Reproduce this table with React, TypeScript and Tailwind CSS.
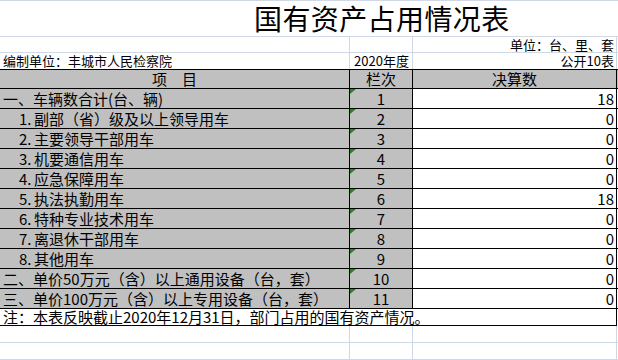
import React from "react";

type Row = { prefix?: string; label: string; n: string; v: string };

const rows: Row[] = [
  { label: "一、车辆数合计(台、辆)", n: "1", v: "18" },
  { prefix: "1.", label: "副部（省）级及以上领导用车", n: "2", v: "0" },
  { prefix: "2.", label: "主要领导干部用车", n: "3", v: "0" },
  { prefix: "3.", label: "机要通信用车", n: "4", v: "0" },
  { prefix: "4.", label: "应急保障用车", n: "5", v: "0" },
  { prefix: "5.", label: "执法执勤用车", n: "6", v: "18" },
  { prefix: "6.", label: "特种专业技术用车", n: "7", v: "0" },
  { prefix: "7.", label: "离退休干部用车", n: "8", v: "0" },
  { prefix: "8.", label: "其他用车", n: "9", v: "0" },
  { label: "二、单价50万元（含）以上通用设备（台，套）", n: "10", v: "0" },
  { label: "三、单价100万元（含）以上专用设备（台，套）", n: "11", v: "0" },
];

function Triangle() {
  return (
    <svg className="absolute left-0 top-0" width="6" height="6" viewBox="0 0 6 6">
      <polygon points="0,0 6,0 0,5" fill="#1a8a1a" />
    </svg>
  );
}

export default function App() {
  return (
    <div
      className="w-[618px] h-[360px] bg-white overflow-hidden border-t border-[#d0d7e5] text-black"
      style={{ fontFamily: '"Noto Sans CJK SC", "Noto Sans", sans-serif' }}
    >
      {/* title */}
      <div className="h-[36px] border-b border-[#d0d7e5] flex items-end pl-[254px]">
        <span className="text-[28px] leading-[35px] tracking-[0.4px]">国有资产占用情况表</span>
      </div>

      {/* unit row */}
      <div className="grid grid-cols-[350px_63px_204px] h-[16px] border-b border-[#d0d7e5] text-[13px] leading-[15px]">
        <div className="border-r border-[#d0d7e5]" />
        <div className="border-r border-[#d0d7e5]" />
        <div className="border-r border-[#d0d7e5] text-right pr-[2px]">单位：台、里、套</div>
      </div>

      {/* org row */}
      <div className="grid grid-cols-[350px_63px_204px] h-[17px] border-b border-black text-[13px] leading-[16px]">
        <div className="border-r border-[#d0d7e5] pl-[3px]">编制单位：丰城市人民检察院</div>
        <div className="border-r border-[#d0d7e5] text-center pl-[1px]">2020年度</div>
        <div className="border-r border-[#d0d7e5] text-right pr-[2px]">公开10表</div>
      </div>

      {/* header */}
      <div className="grid grid-cols-[350px_63px_204px] h-[19px] border-b border-black bg-[#c0c0c0] text-[15px] leading-[18px]">
        <div className="border-r border-black text-center">项　目</div>
        <div className="border-r border-black text-center">栏次</div>
        <div className="border-r border-black text-center">决算数</div>
      </div>

      {/* data rows */}
      {rows.map((r) => (
        <div
          key={r.n}
          className="grid grid-cols-[350px_63px_204px] h-[20px] border-b border-black text-[15px] leading-[19px]"
        >
          <div className={`border-r border-black bg-[#c0c0c0] whitespace-nowrap ${r.prefix ? "pl-[19px]" : "pl-[3px]"}`}>
            {r.prefix && <span className="inline-block w-[15px]">{r.prefix}</span>}
            {r.label}
          </div>
          <div className="relative border-r border-black bg-[#c0c0c0] text-center">
            <Triangle />
            {r.n}
          </div>
          <div className="border-r border-black bg-white text-right pr-[2px]">{r.v}</div>
        </div>
      ))}

      {/* note */}
      <div className="h-[17px] w-[617px] border-b border-r border-black text-[15px] leading-[16px] pl-[3px] whitespace-nowrap">
        注：本表反映截止2020年12月31日，部门占用的国有资产情况。
      </div>

      {/* empty rows */}
      {[0, 1].map((i) => (
        <div key={i} className="grid grid-cols-[350px_63px_204px] h-[17px] border-b border-[#d0d7e5]">
          <div className="border-r border-[#d0d7e5]" />
          <div className="border-r border-[#d0d7e5]" />
          <div className="border-r border-[#d0d7e5]" />
        </div>
      ))}
    </div>
  );
}
